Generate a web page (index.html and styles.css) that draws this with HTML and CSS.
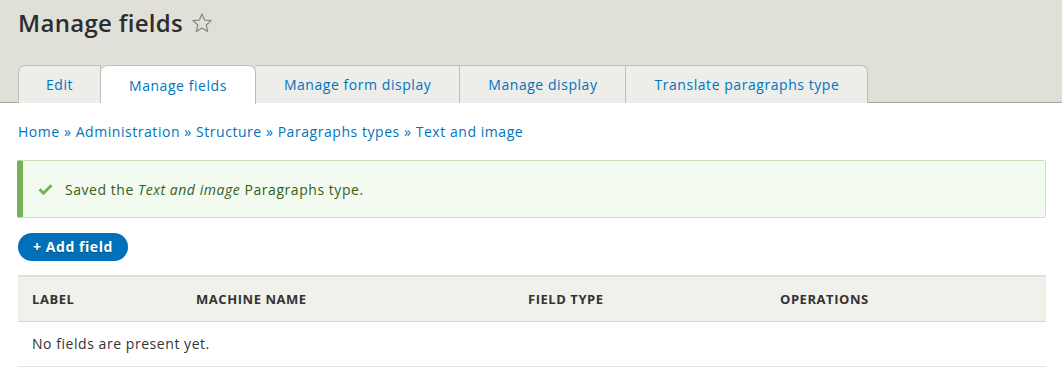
FILE: index.html
```html
<!DOCTYPE html>
<html lang="en">
<head>
<meta charset="utf-8">
<title>Manage fields</title>
<link rel="stylesheet" href="styles.css">
</head>
<body>
<header class="page-head">
  <h1 class="page-title">Manage fields
    <svg class="star" width="22" height="22" viewBox="0 0 24 24"><path d="M12 2.2l2.9 6.6 7.1.6-5.4 4.7 1.6 7-6.2-3.7-6.2 3.7 1.6-7L2 9.4l7.1-.6z" fill="none" stroke="#8a8a80" stroke-width="1.4" stroke-linejoin="round"/></svg>
  </h1>
  <nav class="tabs">
    <a class="tab" href="#">Edit</a>
    <a class="tab active" href="#">Manage fields</a>
    <a class="tab" href="#">Manage form display</a>
    <a class="tab" href="#">Manage display</a>
    <a class="tab" href="#">Translate paragraphs type</a>
  </nav>
</header>
<main class="content">
  <div class="breadcrumb">
    <a href="#">Home</a> » <a href="#">Administration</a> » <a href="#">Structure</a> » <a href="#">Paragraphs types</a> » <a href="#">Text and image</a>
  </div>
  <div class="message">
    <svg class="check" width="15" height="12" viewBox="0 0 15 12"><path d="M1.5 6.2l4 4 8-8" fill="none" stroke="#77b259" stroke-width="3"/></svg>
    <span>Saved the <em>Text and image</em> Paragraphs type.</span>
  </div>
  <a class="button" href="#">+ Add field</a>
  <table class="fields">
    <thead>
      <tr><th class="c1">Label</th><th class="c2">Machine name</th><th class="c3">Field type</th><th class="c4">Operations</th></tr>
    </thead>
    <tbody>
      <tr><td colspan="4">No fields are present yet.</td></tr>
    </tbody>
  </table>
</main>
</body>
</html>
```
FILE: styles.css
```css
html, body { margin: 0; padding: 0; }
body {
  font-family: "Open Sans", "DejaVu Sans", sans-serif;
  font-size: 14px;
  letter-spacing: 0.55px;
  color: #333;
  background: #fff;
  width: 1062px;
  height: 380px;
  overflow: hidden;
}
a { color: #0074bd; text-decoration: none; }
.page-head {
  background: #e0e0d8;
  border-bottom: 1px solid #a6a7a2;
  padding: 0 0 0 18px;
  height: 103px;
  box-sizing: border-box;
  display: flex;
  flex-direction: column;
}
.page-title {
  margin: 0;
  font-size: 24px;
  font-weight: 600;
  letter-spacing: 0.3px;
  color: #2d2d2d;
  line-height: 30px;
  height: 46px;
  display: flex;
  align-items: center;
  align-self: flex-start;
  gap: 8px;
}
.tabs {
  display: flex;
  margin-top: auto;
  height: 38px;
  margin-bottom: -1px;
}
.tab {
  display: flex;
  align-items: center;
  justify-content: center;
  background: #ededea;
  border: 1px solid #bfbfba;
  border-bottom: none;
  border-left: none;
  color: #0074bd;
  font-size: 14px;
  padding: 0 28px;
  box-sizing: border-box;
  height: 38px;
}
.tab:first-child { border-left: 1px solid #bfbfba; border-top-left-radius: 7px; width: 83px; padding: 0; }
.tab:last-child { border-top-right-radius: 7px; }
.tab.active { background: #fff; border-radius: 7px 7px 0 0; height: 39px; }
.content { padding: 0 16px 0 18px; }
.breadcrumb {
  margin-top: 20px;
  font-size: 14px;
  line-height: 18px;
  color: #0074bd;
}
.message {
  margin-top: 19px;
  margin-left: -1px;
  height: 58px;
  box-sizing: border-box;
  background: #f3faef;
  border: 1px solid #c9e1bd;
  border-left: 6px solid #77b259;
  border-radius: 2px;
  color: #325e1c;
  display: flex;
  align-items: center;
  padding-left: 15px;
  gap: 12px;
  font-size: 14px;
}
.message em { font-style: italic; }
.button {
  display: inline-block;
  margin-top: 15px;
  background: #0071b8;
  color: #fff;
  font-weight: 700;
  font-size: 14px;
  border-radius: 14px;
  height: 28px;
  line-height: 28px;
  padding: 0;
  text-align: center;
  width: 110px;
  box-sizing: border-box;
  text-shadow: 0 1px 0 #004e80;
}
.fields {
  margin-top: 14px;
  width: 1028px;
  border-collapse: collapse;
  table-layout: fixed;
}
.fields th {
  background: #f1f1ec;
  border-top: 2px solid #e0e0d8;
  border-bottom: 1px solid #d6d6d0;
  height: 45px;
  box-sizing: border-box;
  text-align: left;
  text-transform: uppercase;
  font-size: 13px;
  font-weight: 700;
  color: #333;
  padding: 0 0 0 14px;
}
.fields .c1 { width: 164px; }
.fields .c2 { width: 332px; }
.fields .c3 { width: 252px; }
.fields td {
  height: 44px;
  padding: 0 0 0 14px;
  border-bottom: 1px solid #e6e4df;
  font-size: 14px;
  color: #333;
}
```
